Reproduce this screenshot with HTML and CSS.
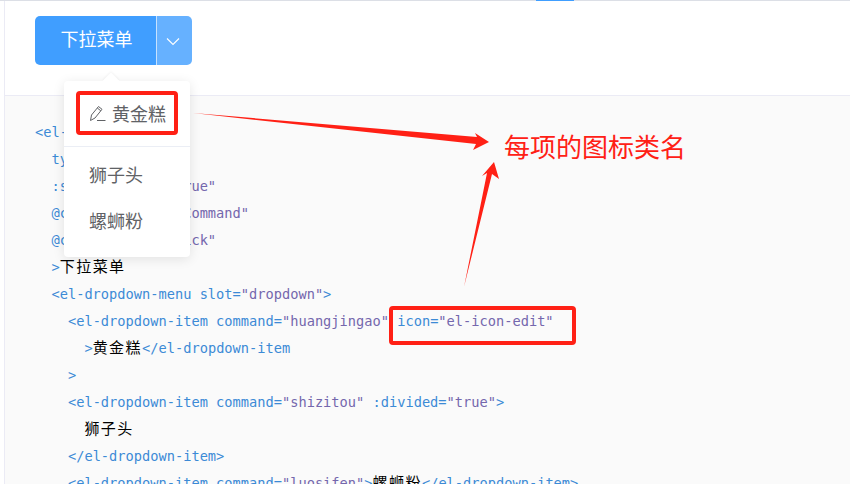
FILE: index.html
```html
<!DOCTYPE html>
<html lang="zh">
<head>
<meta charset="utf-8">
<title>下拉菜单</title>
<link rel="stylesheet" href="styles.css">
</head>
<body>
<div class="tabs"><span class="tab-active"></span></div>
<main class="block">
  <section class="demo">
    <div class="split">
      <button class="split-main">下拉菜单</button>
      <button class="split-caret" aria-label="展开">
        <svg width="14" height="14" viewBox="0 0 14 14"><path d="M1 4.500 7 10.500l6-6" fill="none" stroke="#fff" stroke-width="1.100"/></svg>
      </button>
    </div>
  </section>
  <pre class="code"><code><span class="line"><span class="t">&lt;el-dropdown</span></span>
<span class="line">  <span class="t">type=</span><span class="s">"primary"</span></span>
<span class="line">  <span class="t">:split-button=</span><span class="s">"true"</span></span>
<span class="line">  <span class="t">@command=</span><span class="s">"handleCommand"</span></span>
<span class="line">  <span class="t">@click=</span><span class="s">"handleClick"</span></span>
<span class="line">  <span class="t">&gt;</span><span class="zh">下拉菜单</span></span>
<span class="line">  <span class="t">&lt;el-dropdown-menu slot=</span><span class="s">"dropdown"</span><span class="t">&gt;</span></span>
<span class="line">    <span class="t">&lt;el-dropdown-item command=</span><span class="s">"huangjingao"</span> <span class="t">icon=</span><span class="s">"el-icon-edit"</span></span>
<span class="line">      <span class="t">&gt;</span><span class="zh">黄金糕</span><span class="t">&lt;/el-dropdown-item</span></span>
<span class="line">    <span class="t">&gt;</span></span>
<span class="line">    <span class="t">&lt;el-dropdown-item command=</span><span class="s">"shizitou"</span> <span class="t">:divided=</span><span class="s">"true"</span><span class="t">&gt;</span></span>
<span class="line">      <span class="zh">狮子头</span></span>
<span class="line">    <span class="t">&lt;/el-dropdown-item&gt;</span></span>
<span class="line">    <span class="t">&lt;el-dropdown-item command=</span><span class="s">"luosifen"</span><span class="t">&gt;</span><span class="zh">螺蛳粉</span><span class="t">&lt;/el-dropdown-item&gt;</span></span></code></pre>
</main>

<ul class="menu">
  <li class="item item-first">
    <svg class="edit-icon" width="18" height="18" viewBox="0 0 18 18"><path d="M1.500 16.500 2.500 11 9.500 2.500l3.500 2.800-7 8.700z M8.300 4l3.500 2.800 M8 16.500h8.500" fill="none" stroke="#606266" stroke-width="1"/></svg>
    黄金糕
  </li>
  <li class="item item-divided">狮子头</li>
  <li class="item">螺蛳粉</li>
</ul>

<svg class="notes" width="850" height="484" viewBox="0 0 850 484">
  <rect class="box" x="78" y="93" width="98" height="40" rx="2"/>
  <rect class="box" x="391" y="308" width="183" height="35" rx="2"/>
  <polygon class="ink" points="193,113 477,137 475,133 489,142 473,150 476,144"/>
  <polygon class="ink" points="464,287 487,173 482,176 494,162 499,179 492,174"/>
</svg>
<p class="note-text">每项的图标类名</p>
</body>
</html>
```
FILE: styles.css
```css
* { box-sizing: border-box; }
html, body { margin: 0; padding: 0; }
body {
  width: 850px;
  height: 484px;
  overflow: hidden;
  position: relative;
  background: #fff;
  font-family: "Noto Sans CJK SC", "Noto Sans", sans-serif;
}
.tabs {
  height: 1px;
  background: #dcdfe6;
  padding-left: 536px;
}
.tab-active {
  display: block;
  width: 38px;
  height: 1px;
  background: #409eff;
}
.block {
  margin-left: 4px;
  border-left: 1px solid #ebebf5;
}
.demo {
  height: 95px;
  padding: 15px 30px 0;
  border-bottom: 1px solid #ebebf5;
}
.split { display: flex; width: 157px; height: 49px; }
.split button {
  border: 0;
  padding: 0;
  margin: 0;
  color: #fff;
  font: inherit;
}
.split-main {
  width: 122px;
  background: #409eff;
  border-right: 1px solid #c6e2ff !important;
  border-radius: 5px 0 0 5px;
  font-size: 18px !important;
  padding: 0 0 5px 2px !important;
}
.split-caret {
  width: 35px;
  background: #66b1ff;
  border-radius: 0 5px 5px 0;
  display: flex;
  align-items: center;
  justify-content: center;
  padding-right: 3px !important;
}
.code {
  margin: 0;
  height: 388px;
  padding: 23px 0 0 30px;
  background: #fafafa;
  font-family: "DejaVu Sans Mono", monospace;
  font-size: 13.68px;
  line-height: 27px;
  overflow: hidden;
}
.code code { font: inherit; }
.line { display: inline-block; height: 27px; vertical-align: top; }
.t { color: #3c8ad6; }
.s { color: #7467ad; }
.zh {
  color: #000;
  font-family: "Noto Sans CJK SC", sans-serif;
  font-size: 15px;
  letter-spacing: 1.470px;
  line-height: 1;
}
.menu {
  position: absolute;
  left: 64px;
  top: 81px;
  width: 126px;
  height: 176px;
  margin: 0;
  padding: 10px 0;
  list-style: none;
  background: #fff;
  border-radius: 4px;
  box-shadow: 0 2px 12px rgba(0, 0, 0, .1);
}
.menu::before {
  content: "";
  position: absolute;
  left: 41px;
  top: -6px;
  width: 12px;
  height: 12px;
  background: #fff;
  transform: rotate(45deg);
  box-shadow: -1px -1px 2px rgba(0, 0, 0, .04);
}
.item {
  position: relative;
  display: flex;
  align-items: center;
  height: 45px;
  padding-left: 25px;
  font-size: 18px;
  color: #606266;
}
.item-first { height: 55px; gap: 5px; padding-bottom: 12px; }
.item-divided {
  height: 51px;
  padding-top: 4px;
  border-top: 1px solid #ebeef5;
}
.edit-icon { flex: none; }
.notes { position: absolute; left: 0; top: 0; }
.box { fill: none; stroke: #ff2015; stroke-width: 4; }
.ink { fill: #ff2015; }
.note-text {
  position: absolute;
  left: 504px;
  top: 127px;
  margin: 0;
  font-size: 26px;
  line-height: 38px;
  color: #ff2015;
  white-space: nowrap;
}
```
